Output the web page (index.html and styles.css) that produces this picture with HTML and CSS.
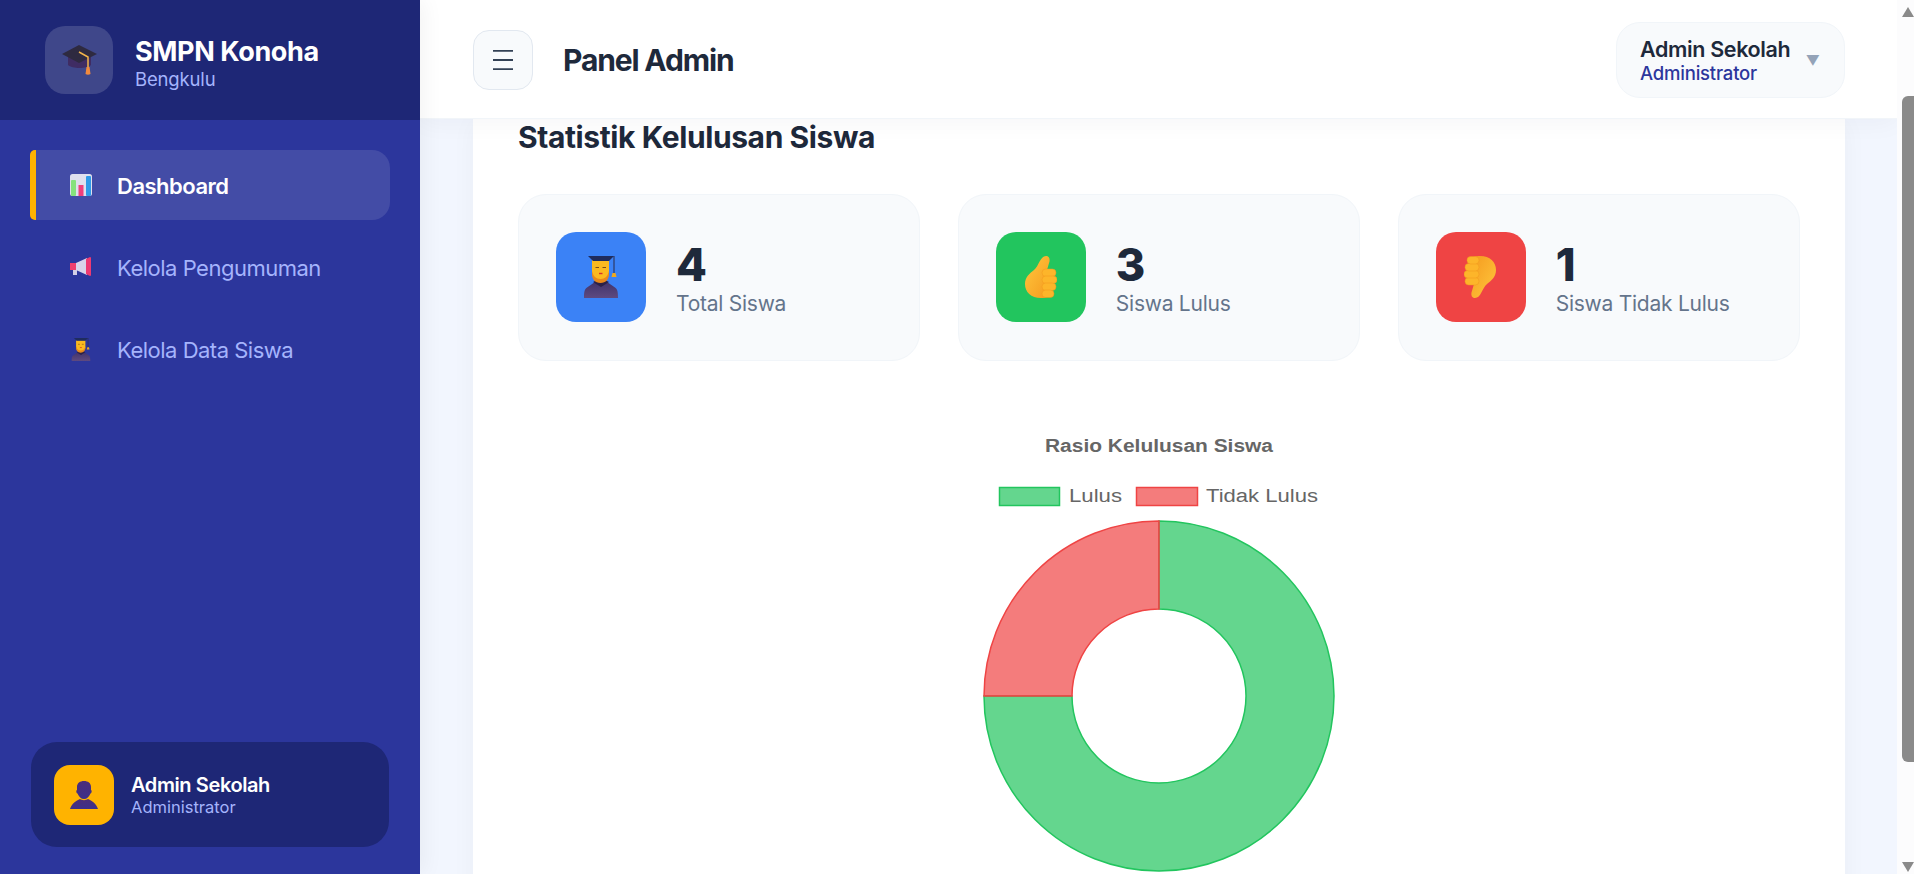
FILE: index.html
```html
<!DOCTYPE html>
<html lang="id">
<head>
<meta charset="utf-8">
<title>Panel Admin</title>
<link rel="stylesheet" href="styles.css">
</head>
<body>
<svg class="defs" width="0" height="0" aria-hidden="true">
  <defs>
    <linearGradient id="yel" x1="0" y1="0" x2="1" y2="1"><stop offset="0" stop-color="#ffc83d"/><stop offset="1" stop-color="#f59a1f"/></linearGradient>
    <linearGradient id="robe" x1="0" y1="0" x2="0" y2="1"><stop offset="0" stop-color="#40336b"/><stop offset="1" stop-color="#5e4a80"/></linearGradient>
    <symbol id="student" viewBox="0 0 34 42">
      <path d="M0 42c0-6 .5-9 3-10.500L11 26h12l8 5.500c2.500 1.500 3 4.500 3 10.500z" fill="url(#robe)"/>
      <path d="M9 26l8 5 8-5-8-4z" fill="#2b2148"/>
      <path d="M8 4h17v12c0 6-4 9-8.500 9S8 22 8 16z" fill="#fbb91f"/>
      <path d="M8 15c1 5 4 8 8.500 8s7.500-3 8.500-8v3c0 5-3 9-8.500 9S8 23 8 18z" fill="#e8891c"/>
      <path d="M11.500 11.500h3.500M18.500 11.500H22" stroke="#7a4a18" stroke-width="1"/>
      <path d="M15 17.500h3.500" stroke="#d6322c" stroke-width="1.400"/>
      <path d="M4 0h26l-5 5H9z" fill="#1f2c5e"/>
      <path d="M30 0v17" stroke="#2a2a4a" stroke-width="1"/>
      <path d="M28.500 17h3l1 4h-5z" fill="#f0a81e"/>
    </symbol>
    <symbol id="thumb" viewBox="0 0 33 42">
      <path d="M22 0c3 0 4 2.500 3.500 5.500L23 14v27c-2 1-4 1-6 1C7 42 1 36 1 28c0-7 5-11 9-14 5-4 6-14 12-14z" fill="url(#yel)"/>
      <g fill="#fdb52a" stroke="#f0971f" stroke-width=".5">
        <rect x="18" y="13" width="14" height="7.500" rx="3.700"/>
        <rect x="18" y="20" width="15" height="7.500" rx="3.700"/>
        <rect x="18" y="27" width="14" height="7.500" rx="3.700"/>
        <rect x="18" y="34" width="12" height="7.500" rx="3.700"/>
      </g>
    </symbol>
  </defs>
</svg>
<div class="app">
  <aside class="sidebar">
    <div class="brand">
      <div class="brand-logo">
        <svg class="brand-cap" width="35" height="30" viewBox="0 0 35 30">
          <path d="M6 11v9c4 4 19 4 23 0v-9z" fill="#3f2c63"/>
          <path d="M17 0L35 9 17 18 0 9z" fill="#2e2a40"/>
          <path d="M17 7l9 5v11" fill="none" stroke="#f3b54a" stroke-width="1.500"/>
          <path d="M24.500 22h3l1 7c-1.500 1-3.500 1-5 0z" fill="#f28a3e"/>
        </svg>
      </div>
      <div class="brand-text">
        <div class="brand-name">SMPN Konoha</div>
        <div class="brand-sub">Bengkulu</div>
      </div>
    </div>
    <nav class="nav">
      <a class="nav-item active">
        <svg class="nav-icon" width="22" height="22" viewBox="0 0 22 22">
          <rect width="22" height="22" rx="2.500" fill="#dfe0ee"/>
          <rect x="1" y="6" width="5" height="16" rx="1" fill="#86e27c"/>
          <rect x="8.500" y="11" width="5" height="11" fill="#ef3f7c"/>
          <rect x="16" y="2" width="5" height="20" rx="1" fill="#2f9be8"/>
        </svg>
        <span>Dashboard</span>
      </a>
      <a class="nav-item">
        <svg class="nav-icon" width="22" height="22" viewBox="0 0 22 22">
          <path d="M0 7h6v7H0z" fill="#f0406e"/>
          <path d="M3 14h4v5H3z" fill="#d3cfe6"/>
          <path d="M6 7l11-5v17L6 14z" fill="#d9d5ea"/>
          <path d="M16 3l4-2c1 0 1 1 1 1v17s0 1-1 1l-4-2z" fill="#ee3a72"/>
        </svg>
        <span>Kelola Pengumuman</span>
      </a>
      <a class="nav-item">
        <svg class="nav-icon" width="22" height="23"><use href="#student"/></svg>
        <span>Kelola Data Siswa</span>
      </a>
    </nav>
    <div class="profile">
      <div class="profile-avatar">
        <svg width="30" height="30" viewBox="0 0 30 30">
          <defs><linearGradient id="bust" x1="0" y1="0" x2="0" y2="1"><stop offset="0" stop-color="#4a2d7a"/><stop offset="1" stop-color="#3d2f8a"/></linearGradient></defs>
          <path d="M8 7c0-4 3-6 7-6s7 2 7 6v3c1 0 1 3-.5 3.500C20 17 18 19 15 19s-5-2-6.500-5.500C7 13 7 10 8 10z" fill="url(#bust)"/>
          <path d="M1 29c2-6 6-8 10-10 2 1.500 6 1.500 8 0 4 2 8 4 10 10z" fill="url(#bust)"/>
        </svg>
      </div>
      <div class="profile-text">
        <div class="profile-name">Admin Sekolah</div>
        <div class="profile-role">Administrator</div>
      </div>
    </div>
  </aside>
  <div class="main">
    <header class="topbar">
      <button class="menu-btn" type="button" aria-label="Menu">
        <svg width="20" height="20" viewBox="0 0 20 20"><path d="M0 .8h20M0 10h20M0 19.200h20" stroke="#334155" stroke-width="1.800" fill="none"/></svg>
      </button>
      <h1 class="page-title">Panel Admin</h1>
      <div class="user-pill">
        <div class="user-text">
          <div class="user-name">Admin Sekolah</div>
          <div class="user-role">Administrator</div>
        </div>
        <span class="user-caret">▼</span>
      </div>
    </header>
    <main class="content">
      <section class="panel">
        <h2 class="panel-title">Statistik Kelulusan Siswa</h2>
        <div class="stats">
          <div class="stat">
            <div class="stat-icon blue"><svg width="34" height="42"><use href="#student"/></svg></div>
            <div class="stat-text"><div class="stat-num">4</div><div class="stat-label">Total Siswa</div></div>
          </div>
          <div class="stat">
            <div class="stat-icon green"><svg width="33" height="42"><use href="#thumb"/></svg></div>
            <div class="stat-text"><div class="stat-num">3</div><div class="stat-label">Siswa Lulus</div></div>
          </div>
          <div class="stat">
            <div class="stat-icon red"><svg class="flip" width="33" height="42"><use href="#thumb"/></svg></div>
            <div class="stat-text"><div class="stat-num">1</div><div class="stat-label">Siswa Tidak Lulus</div></div>
          </div>
        </div>
        <svg class="chart" width="1282" height="520" viewBox="0 0 1282 520">
          <text class="chart-title" x="527" y="91" textLength="228" lengthAdjust="spacingAndGlyphs">Rasio Kelulusan Siswa</text>
          <rect class="seg-green" x="481.500" y="126.500" width="60" height="18"/>
          <text class="chart-legend" x="551" y="141" textLength="53" lengthAdjust="spacingAndGlyphs">Lulus</text>
          <rect class="seg-red" x="618.500" y="126.500" width="61" height="18"/>
          <text class="chart-legend" x="688" y="141" textLength="112" lengthAdjust="spacingAndGlyphs">Tidak Lulus</text>
          <path class="seg-green" d="M641 160A175 175 0 1 1 466 335H554A87 87 0 1 0 641 248Z"/>
          <path class="seg-red" d="M466 335A175 175 0 0 1 641 160V248A87 87 0 0 0 554 335Z"/>
        </svg>
      </section>
    </main>
  </div>
  <div class="scrollbar">
    <span class="sb-arrow up"></span>
    <span class="sb-thumb"></span>
    <span class="sb-arrow down"></span>
  </div>
</div>
</body>
</html>
```
FILE: styles.css
```css
* { box-sizing: border-box; }
html, body { margin: 0; height: 100%; overflow: hidden; }
body { font-family: "Inter", "Noto Sans", sans-serif; background: #f2f6fe; color: #1e293b; }
.defs { position: absolute; }
.app { display: flex; height: 874px; }

.sidebar { width: 420px; flex: none; display: flex; flex-direction: column; background: #2c369c; box-shadow: 4px 0 20px rgba(0,0,0,.05); position: relative; z-index: 3; }
.brand { height: 120px; flex: none; display: flex; align-items: center; gap: 22px; padding: 0 45px; background: #1e2776; }
.brand-logo { width: 68px; height: 68px; border-radius: 20px; background: rgba(255,255,255,.15); display: flex; align-items: center; justify-content: center; }
.brand-text { padding-top: 4px; }
.brand-name { font-size: 27px; font-weight: 700; letter-spacing: -.4px; line-height: 34px; color: #fff; }
.brand-sub { font-size: 18.500px; line-height: 21px; color: #a5b4fc; letter-spacing: -.15px; }

.nav { flex: 1; display: flex; flex-direction: column; gap: 12px; padding: 30px 30px 0; }
.nav-item { height: 70px; display: flex; align-items: center; gap: 25px; padding-left: 40px; border-radius: 18px; font-size: 22px; font-weight: 400; letter-spacing: -.5px; color: #a5b4fc; }
.nav-item span { padding-top: 2px; }
.nav-item.active { background: rgba(255,255,255,.11); border-left: 6px solid #ffb300; padding-left: 34px; border-radius: 5px 18px 18px 5px; color: #fff; font-weight: 600; }
.nav-icon { flex: none; }

.profile { flex: none; margin: 0 31px 27px; height: 105px; display: flex; align-items: center; gap: 17px; padding: 0 23px; border-radius: 26px; background: #1e2776; }
.profile-avatar { width: 60px; height: 60px; border-radius: 16px; background: #ffb300; display: flex; align-items: center; justify-content: center; }
.profile-name { font-size: 20px; font-weight: 600; letter-spacing: -.4px; line-height: 24px; color: #fff; }
.profile-role { font-size: 16.500px; line-height: 20px; color: #a5b4fc; }

.main { flex: 1; min-width: 0; display: flex; flex-direction: column; }
.topbar { height: 119px; flex: none; display: flex; align-items: center; padding: 2px 52px 0 53px; background: #fff; border-bottom: 1px solid #f1f5f9; box-shadow: 0 4px 24px rgba(15,23,42,.04); position: relative; z-index: 2; }
.menu-btn { width: 60px; height: 60px; padding: 0; display: flex; align-items: center; justify-content: center; background: #f8fafc; border: 1px solid #e2e8f0; border-radius: 16px; }
.page-title { margin: 0 0 0 30px; font-size: 30px; font-weight: 700; letter-spacing: -1.150px; color: #1e293b; }
.user-pill { margin-left: auto; width: 229px; height: 76px; display: flex; align-items: center; justify-content: space-between; padding: 0 24px 0 23px; background: #f8fafc; border: 1px solid #f1f5f9; border-radius: 24px; }
.user-name { font-size: 21.500px; font-weight: 600; letter-spacing: -.35px; line-height: 26px; color: #1e293b; }
.user-role { font-size: 18.500px; font-weight: 500; letter-spacing: -.2px; line-height: 22px; color: #2c369c; }
.user-caret { font-size: 14px; color: #94a3b8; }

.content { flex: 1; min-height: 0; overflow: hidden; padding: 0 52px 0 53px; }
.panel { height: calc(100% + 40px); padding: 0 45px; background: #fff; box-shadow: 0 4px 24px rgba(15,23,42,.04); }
.panel-title { margin: -1px 0 0; font-size: 30px; line-height: 38px; font-weight: 700; letter-spacing: -.4px; color: #1e293b; }
.stats { display: grid; grid-template-columns: repeat(3, 1fr); gap: 37.500px; margin-top: 38px; }
.stat { height: 167px; display: flex; align-items: center; gap: 30px; padding: 0 37px 2px; background: #f8fafc; border: 1px solid #f1f5f9; border-radius: 28px; }
.stat-icon { width: 90px; height: 90px; flex: none; border-radius: 20px; display: flex; align-items: center; justify-content: center; }
.blue { background: #3b82f6; }
.green { background: #22c55e; }
.red { background: #ef4444; }
.flip { transform: rotate(180deg); }
.stat-text { padding-top: 5px; }
.stat-num { font-size: 45px; font-weight: 800; line-height: 50px; color: #1e293b; }
.stat-label { font-size: 21px; line-height: 28px; letter-spacing: -.25px; color: #64748b; }

.chart { display: block; }
.chart-title { font-family: "Liberation Sans", sans-serif; font-weight: 700; font-size: 18px; fill: #666; }
.chart-legend { font-family: "Liberation Sans", sans-serif; font-size: 18px; fill: #666; }
.seg-green { fill: rgba(34,197,94,.7); stroke: #22c55e; stroke-width: 1.500; }
.seg-red { fill: rgba(239,68,68,.7); stroke: #ef4444; stroke-width: 1.500; }

.scrollbar { width: 17px; flex: none; display: flex; flex-direction: column; align-items: flex-end; background: #fcfcfd; position: relative; z-index: 4; }
.sb-arrow { display: block; width: 12px; height: 10px; background: #8a8a8a; }
.sb-arrow.up { margin-top: 7px; clip-path: polygon(50% 0, 100% 100%, 0 100%); }
.sb-thumb { display: block; width: 12px; height: 666px; margin-top: 79px; background: #8a8a8a; border-radius: 6px 0 0 6px; }
.sb-arrow.down { margin-top: auto; margin-bottom: 2px; clip-path: polygon(0 0, 100% 0, 50% 100%); }
```
